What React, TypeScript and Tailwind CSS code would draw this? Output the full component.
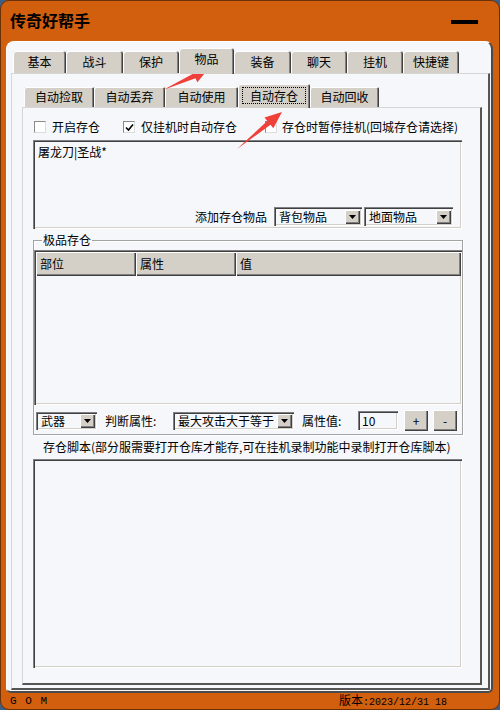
import React from "react";

const raised =
  "shadow-[inset_1px_1px_0_#ffffff,inset_-1px_-1px_0_#404040,inset_-2px_-2px_0_#808080]";
const sunken =
  "shadow-[inset_1px_1px_0_#808080,inset_2px_2px_0_#404040,inset_-1px_-1px_0_#ffffff,inset_-2px_-2px_0_#d4d0c8]";
const tabEdge =
  "shadow-[inset_1px_1px_0_#ffffff,inset_-1px_0_0_#404040,inset_-2px_0_0_#808080]";

const mainTabs = [
  { label: "基本", w: "w-[53px]" },
  { label: "战斗", w: "w-[57px]" },
  { label: "保护", w: "w-[56px]" },
  { label: "物品", w: "w-[55px]", active: true },
  { label: "装备", w: "w-[57px]" },
  { label: "聊天", w: "w-[56px]" },
  { label: "挂机", w: "w-[56px]" },
  { label: "快捷键", w: "w-[56px]" },
];

const subTabs = [
  { label: "自动捡取", w: "w-[70px]" },
  { label: "自动丢弃", w: "w-[71px]" },
  { label: "自动使用", w: "w-[73px]" },
  { label: "自动存仓", w: "w-[72px]", active: true },
  { label: "自动回收", w: "w-[69px]" },
];

function Arrow() {
  return (
    <svg width="15" height="14" viewBox="0 0 15 14" className="shrink-0">
      <path d="M4 5 L7.5 9 L11 5 Z" fill="#000" />
    </svg>
  );
}

function Combo({ className, text }: { className: string; text: string }) {
  return (
    <div className={`flex items-center bg-[#f5f7fa] pl-[5px] pr-[2px] ${sunken} ${className}`}>
      <span className="flex-1 leading-[14px] whitespace-nowrap">{text}</span>
      <div className={`flex items-center justify-center w-[15px] h-[14px] shrink-0 bg-[#d4d0c8] ${raised}`}>
        <Arrow />
      </div>
    </div>
  );
}

function Check({ checked }: { checked?: boolean }) {
  return (
    <div className="w-[12px] h-[12px] bg-white border border-t-[#8a8a8a] border-l-[#8a8a8a] border-r-[#dcdcdc] border-b-[#dcdcdc] flex items-center justify-center shrink-0">
      {checked && (
        <svg width="9" height="9" viewBox="0 0 9 9">
          <path d="M1 4.5 L3.5 7 L8 1.5" fill="none" stroke="#000" strokeWidth="1.6" />
        </svg>
      )}
    </div>
  );
}

export default function App() {
  return (
    <div className="w-[500px] h-[710px] bg-[#3d5f86] font-['Noto_Sans_CJK_SC',sans-serif] text-[12px] text-black relative">
      <div className="w-full h-full rounded-[9px] bg-[#d25f0e] border border-[#6b3006] flex flex-col overflow-hidden">
        {/* title bar */}
        <div className="h-[40px] flex items-center justify-between pl-[9px] pr-[21px] shrink-0">
          <span className="text-[16px] font-bold leading-[20px] -mt-[2px]">传奇好帮手</span>
          <div className="w-[27px] h-[4px] bg-black mt-[2px]" />
        </div>

        {/* client area */}
        <div className="h-[652px] ml-[5px] mr-[6px] bg-[#f5f7fa] rounded-t-[8px] rounded-b-[5px] border-l border-t border-white border-r-2 border-b-2 border-r-[#4a4a4a] border-b-[#4a4a4a] pt-[6px] pl-[4px] pr-[1px] pb-[1px] flex flex-col">
          <div className="h-[25px] flex items-end pl-[2px] shrink-0">
            {mainTabs.map((t) =>
              t.active ? (
                <div
                  key={t.label}
                  className={`${t.w} h-[26px] -mb-px z-10 bg-[#d4d0c8] rounded-t-[3px] ${tabEdge} flex justify-center pt-[4px] leading-[14px]`}
                >
                  {t.label}
                </div>
              ) : (
                <div
                  key={t.label}
                  className={`${t.w} h-[22px] bg-[#d4d0c8] rounded-t-[3px] ${tabEdge} flex items-center justify-center leading-[14px]`}
                >
                  {t.label}
                </div>
              )
            )}
          </div>

          {/* main tab page */}
          <div className="flex-1 flex flex-col border-t border-l border-[#d6d6d6] border-r-2 border-b-2 border-r-[#555555] border-b-[#555555] pt-[10px] pl-[10px] pr-[6px] pb-[3px]">
            <div className="h-[23px] flex items-end pl-[2px] shrink-0">
              {subTabs.map((t) =>
                t.active ? (
                  <div
                    key={t.label}
                    className={`${t.w} h-[24px] -mb-px z-10 bg-[#d4d0c8] rounded-t-[2px] ${tabEdge} flex justify-center pt-[3px]`}
                  >
                    <span className="border border-dotted border-black px-[7px] h-[17px] leading-[15px]">{t.label}</span>
                  </div>
                ) : (
                  <div
                    key={t.label}
                    className={`${t.w} h-[20px] bg-[#d4d0c8] rounded-t-[2px] ${tabEdge} flex items-center justify-center leading-[14px]`}
                  >
                    {t.label}
                  </div>
                )
              )}
            </div>

            {/* sub tab page */}
            <div className="flex-1 flex flex-col border-t border-l border-[#d6d6d6] border-r-2 border-b-2 border-r-[#555555] border-b-[#555555] pl-[10px]">
              <div className="h-[20px] mt-[9px] flex items-center pl-[1px]">
                <div className="w-[89px] flex items-center gap-[6px]">
                  <Check />
                  <span className="leading-[14px]">开启存仓</span>
                </div>
                <div className="w-[142px] flex items-center gap-[6px]">
                  <Check checked />
                  <span className="leading-[14px]">仅挂机时自动存仓</span>
                </div>
                <div className="flex items-center gap-[5px]">
                  <Check />
                  <span className="leading-[14px] whitespace-nowrap">存仓时暂停挂机(回城存仓请选择)</span>
                </div>
              </div>

              {/* item list box */}
              <div className={`mt-[3px] w-[429px] h-[89px] bg-[#f5f7fa] ${sunken} flex flex-col pl-[5px] pt-[5px] pr-[9px] pb-[3px]`}>
                <span className="leading-[14px]">屠龙刀|圣战*</span>
                <div className="flex-1" />
                <div className="flex items-center justify-end">
                  <span className="leading-[14px] mr-[7px]">添加存仓物品</span>
                  <Combo className="w-[88px] h-[19px] mr-[2px]" text="背包物品" />
                  <Combo className="w-[89px] h-[19px]" text="地面物品" />
                </div>
              </div>

              {/* group box */}
              <fieldset className="mt-[4px] w-[429px] border border-[#a3a3a3] shadow-[inset_1px_1px_0_#ffffff,1px_1px_0_#ffffff] pb-[3px]">
                <legend className="ml-[8px] px-[1px] leading-[14px]">极品存仓</legend>
                <div className={`mt-[3px] w-[428px] h-[155px] bg-[#f5f7fa] ${sunken} pl-[2px] pt-[2px] pr-[1px] flex flex-col`}>
                  <div className="h-[24px] flex">
                    <div className={`w-[100px] h-full bg-[#d4d0c8] ${raised} flex items-center pl-[4px]`}>部位</div>
                    <div className={`w-[100px] h-full bg-[#d4d0c8] ${raised} flex items-center pl-[4px]`}>属性</div>
                    <div className={`flex-1 h-full bg-[#d4d0c8] ${raised} flex items-center pl-[4px]`}>值</div>
                  </div>
                </div>
                <div className="mt-[5px] h-[21px] flex items-center pl-[2px]">
                  <Combo className="w-[61px] h-[18px]" text="武器" />
                  <span className="ml-[8px] w-[68px] leading-[14px]">判断属性:</span>
                  <Combo className="w-[121px] h-[18px]" text="最大攻击大于等于" />
                  <span className="ml-[8px] w-[56px] leading-[14px]">属性值:</span>
                  <div className={`w-[40px] h-[19px] bg-[#f5f7fa] ${sunken} flex items-center pl-[4px] leading-[14px]`}>10</div>
                  <div className={`ml-[6px] w-[24px] h-[21px] bg-[#d4d0c8] ${raised} flex items-center justify-center leading-[14px]`}>+</div>
                  <div className={`ml-[5px] w-[24px] h-[21px] bg-[#d4d0c8] ${raised} flex items-center justify-center leading-[14px]`}>-</div>
                </div>
              </fieldset>

              <div className="h-[20px] mt-[2px] flex items-center pl-[10px] whitespace-nowrap leading-[14px]">
                存仓脚本(部分服需要打开仓库才能存,可在挂机录制功能中录制打开仓库脚本)
              </div>

              <div className={`mt-[2px] w-[429px] h-[209px] bg-[#f5f7fa] ${sunken}`} />
            </div>
          </div>
        </div>

        {/* status bar */}
        <div className="flex-1 flex items-center justify-between pl-[9px] pr-[52px] font-['Liberation_Mono','Noto_Sans_CJK_SC',monospace] text-[10px] leading-[12px]">
          <span className="text-[11px] tracking-[1px]">G O M</span>
          <span>
            <span className="text-[12px] font-['Noto_Sans_CJK_SC',sans-serif]">版本</span>:2023/12/31 18
          </span>
        </div>
      </div>

      {/* annotation arrows */}
      <svg className="absolute inset-0 pointer-events-none" width="500" height="710">
        <polygon points="163,90 195.5,78.2 197.4,82.3 209,68 191.6,69.5 193.5,73.6" fill="#f0403a" />
        <polygon points="237,149 270.5,124.7 273.3,128.2 282,112 264.5,117.4 267.3,120.9" fill="#f0403a" />
      </svg>
    </div>
  );
}
